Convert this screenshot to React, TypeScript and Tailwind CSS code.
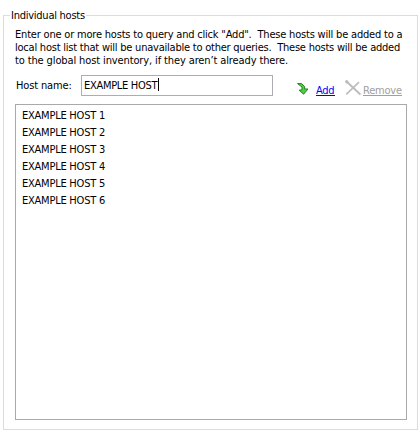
const hosts = [1, 2, 3, 4, 5, 6].map((n) => `EXAMPLE HOST ${n}`);

function AddIcon() {
  return (
    <svg width="12" height="12" viewBox="0 0 12 12" className="block">
      <path
        d="M0.5 0.6H4.5L7.6 3.5V6H11L6.6 11.2L2.2 7.2L5 6.7V4Z"
        fill="#4fd044"
        stroke="#238021"
        strokeWidth="1"
      />
    </svg>
  );
}

function RemoveIcon() {
  return (
    <svg width="16" height="16" viewBox="0 0 16 16" className="block" fill="none" stroke="#bdbdbd">
      <path d="M0.8 0.8L15.4 14.6" strokeWidth="2" />
      <path d="M14 2.2L1.2 14.3" strokeWidth="1.7" />
      <path d="M0.6 0.6L3 3" strokeWidth="2.8" />
    </svg>
  );
}

export default function App() {
  return (
    <div className="h-[432px] w-[420px] bg-white pt-[9px] pl-[3px] font-['DejaVu_Sans_Condensed','DejaVu_Sans',sans-serif] text-[11px] leading-[13px] text-black [font-stretch:condensed]">
      <fieldset className="h-[421px] w-[415px] border border-[#dcdcdc] pl-[11px]">
        <legend className="-ml-[5px] h-[13px] w-[76px] px-[1px] whitespace-pre tracking-[-0.25px]">Individual hosts</legend>
        <div className="mt-[6px] whitespace-pre">
          <p className="tracking-[-0.195px]">Enter one or more hosts to query and click "Add".  These hosts will be added to a</p>
          <p className="tracking-[-0.225px]">local host list that will be unavailable to other queries.  These hosts will be added</p>
          <p className="tracking-[-0.12px]">to the global host inventory, if they aren’t already there.</p>
        </div>
        <div className="mt-[8px] flex h-[21px] whitespace-pre">
          <label className="w-[66px] pt-[4px] pl-[1px] tracking-[-0.15px]">Host name:</label>
          <div className="flex h-[21px] w-[192px] border border-[#abadb3] pt-[2px] pl-[2px]">
            <span className="w-[74px] pt-px tracking-[-0.3px]">EXAMPLE HOST</span>
            <span className="h-[13px] w-px bg-black" />
          </div>
          <div className="ml-[24px] pt-[8px]"><AddIcon /></div>
          <a className="ml-[7px] h-[12px] mt-[9px] w-[19px] border-b border-[#0000ff] tracking-[-0.3px] text-[#0000ff]">Add</a>
          <div className="ml-[10px] pt-[5px]"><RemoveIcon /></div>
          <a className="ml-[2px] h-[12px] mt-[9px] w-[39px] border-b border-[#a0a0a0] tracking-[-0.2px] text-[#a0a0a0]">Remove</a>
        </div>
        <ul className="mt-[8px] h-[316px] w-[392px] border border-[#a9a9ad] pt-[2px] pl-[6px]">
          {hosts.map((h) => (
            <li key={h} className="h-[17px] leading-[17px] tracking-[-0.23px] whitespace-pre">{h}</li>
          ))}
        </ul>
      </fieldset>
    </div>
  );
}
